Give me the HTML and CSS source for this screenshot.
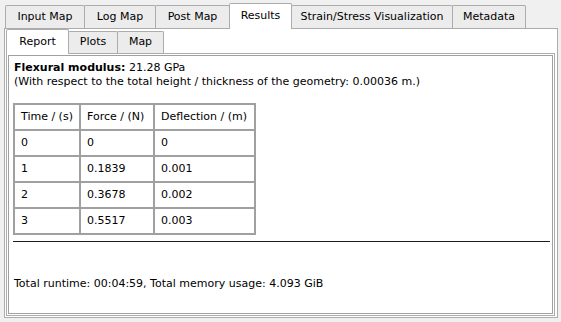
FILE: index.html
```html
<!DOCTYPE html>
<html>
<head>
<meta charset="utf-8">
<link rel="stylesheet" href="styles.css">
</head>
<body>
<div class="window">
  <div class="tabbar">
    <div class="tab t-input">Input Map</div>
    <div class="tab t-log">Log Map</div>
    <div class="tab t-post">Post Map</div>
    <div class="tab t-results active">Results</div>
    <div class="tab t-strain">Strain/Stress Visualization</div>
    <div class="tab t-meta">Metadata</div>
  </div>
  <div class="pane">
    <div class="subtabbar">
      <div class="subtab s-report active">Report</div>
      <div class="subtab s-plots">Plots</div>
      <div class="subtab s-map">Map</div>
    </div>
    <div class="subpane">
      <div class="browser">
        <p class="line"><b>Flexural modulus:</b> 21.28 GPa</p>
        <p class="line">(With respect to the total height / thickness of the geometry: 0.00036 m.)</p>
        <table class="data">
          <tr><td class="c1">Time / (s)</td><td class="c2">Force / (N)</td><td class="c3">Deflection / (m)</td></tr>
          <tr><td>0</td><td>0</td><td>0</td></tr>
          <tr><td>1</td><td>0.1839</td><td>0.001</td></tr>
          <tr><td>2</td><td>0.3678</td><td>0.002</td></tr>
          <tr><td>3</td><td>0.5517</td><td>0.003</td></tr>
        </table>
        <div class="rule"></div>
        <p class="line summary">Total runtime: 00:04:59, Total memory usage: 4.093 GiB</p>
      </div>
    </div>
  </div>
</div>
</body>
</html>
```
FILE: styles.css
```css
html, body {
  margin: 0;
  padding: 0;
  background: #f0f0f0;
}
body {
  width: 561px;
  height: 322px;
  overflow: hidden;
  font-family: "DejaVu Sans", sans-serif;
  font-size: 11px;
  color: #000;
}
.window {
  padding-top: 3px;
}
.tabbar {
  display: flex;
  align-items: flex-end;
  height: 25px;
  padding-left: 5px;
  position: relative;
  z-index: 1;
}
.tab {
  box-sizing: border-box;
  height: 23px;
  line-height: 21px;
  padding: 0;
  margin-right: -1px;
  border: 1px solid #acacac;
  border-bottom: none;
  border-radius: 2px 2px 0 0;
  background: #ececec;
  white-space: nowrap;
  text-align: center;
}
.tab.active {
  height: 26px;
  line-height: 24px;
  margin-bottom: -1px;
  background: #fff;
}
.t-input { width: 80px; }
.t-log { width: 72px; }
.t-post { width: 75px; }
.t-results { width: 63px; }
.t-strain { width: 162px; }
.t-meta { width: 74px; }
.pane {
  box-sizing: border-box;
  margin-left: 4px;
  width: 554px;
  height: 290px;
  border: 1px solid #acacac;
  background: #fff;
  padding: 0 2px 1px 1px;
}
.subtabbar {
  display: flex;
  align-items: flex-end;
  height: 24px;
  position: relative;
  z-index: 1;
}
.subtab {
  box-sizing: border-box;
  height: 22px;
  line-height: 20px;
  padding: 0;
  margin-right: -1px;
  border: 1px solid #acacac;
  border-bottom: none;
  border-radius: 2px 2px 0 0;
  background: #ececec;
  white-space: nowrap;
  text-align: center;
}
.subtab.active {
  height: 25px;
  line-height: 23px;
  margin-bottom: -1px;
  background: #fff;
}
.s-report { width: 63px; }
.s-plots { width: 50px; }
.s-map { width: 47px; }
.subpane {
  box-sizing: border-box;
  height: 263px;
  border: 1px solid #acacac;
  padding: 1px;
  background: #fff;
}
.browser {
  box-sizing: border-box;
  height: 259px;
  border: 1px solid #a0a0a0;
  padding: 4px 3px 4px 4px;
  background: #fff;
}
.line {
  margin: 0;
  padding-left: 1px;
  line-height: 14px;
}
.line:first-child {
  margin-top: 1px;
}
.data {
  border-collapse: separate;
  border-spacing: 0;
  border: 1px solid #a0a0a0;
  margin-top: 14px;
}
.data td {
  border: 1px solid #a0a0a0;
  padding: 0 5px 0 6px;
  height: 24px;
  line-height: 14px;
  white-space: nowrap;
}
.data .c1 { width: 53px; }
.data .c2 { width: 61px; }
.data .c3 { width: 88px; }
.rule {
  margin-top: 6px;
  height: 0;
  border-top: 1px solid #1e1e1e;
  width: 537px;
}
.summary {
  margin-top: 35px;
}
```
